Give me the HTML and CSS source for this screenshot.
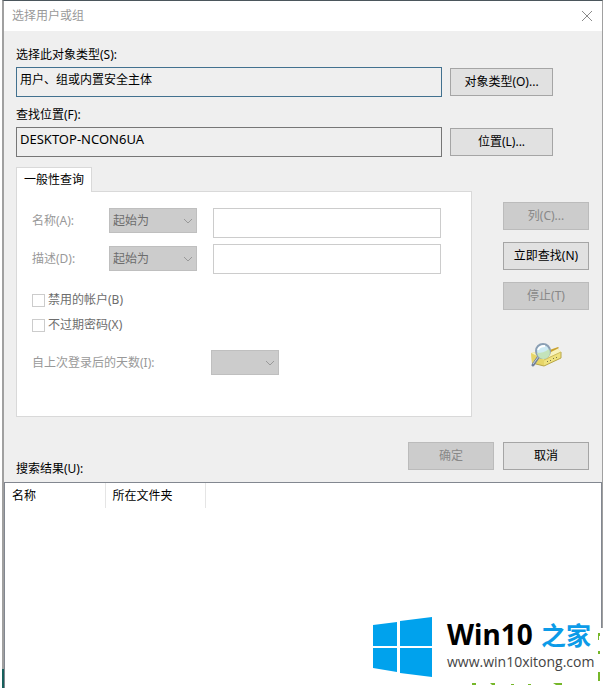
FILE: index.html
```
<!DOCTYPE html>
<html lang="zh-CN">
<head>
    <meta charset="utf-8">
    <title>选择用户或组</title>
    <link rel="stylesheet" href="styles.css">
</head>
<body>
    <form class="dialog">
        <header class="titlebar">
            <h1 class="title">选择用户或组</h1>
            <button class="close" type="button" aria-label="关闭">
                <svg width="12" height="12" viewBox="0 0 12 12"><path d="M1 1l10 10M11 1L1 11" stroke="#8a8a8a" fill="none"/></svg>
            </button>
        </header>

        <div class="content">
            <div class="scope">
                <label class="scopeLabel" for="objectType">选择此对象类型(S):</label>
                <input class="field focused" id="objectType" type="text" value="用户、组或内置安全主体" readonly>
                <button class="btn" type="button">对象类型(O)...</button>
                <label class="scopeLabel" for="location">查找位置(F):</label>
                <input class="field host" id="location" type="text" value="DESKTOP-NCON6UA" readonly>
                <button class="btn" type="button">位置(L)...</button>
            </div>

            <div class="main">
                <section class="query">
                    <button class="tab" type="button">一般性查询</button>
                    <div class="panel">
                        <div class="criteria">
                            <div class="conditions">
                                <label for="nameMode">名称(A):</label>
                                <span class="selectBox">
                                    <select id="nameMode" disabled><option>起始为</option></select>
                                    <svg class="arrow" width="10" height="6" viewBox="0 0 10 6"><path d="M1 1l4 4 4-4"/></svg>
                                </span>
                                <label for="descMode">描述(D):</label>
                                <span class="selectBox">
                                    <select id="descMode" disabled><option>起始为</option></select>
                                    <svg class="arrow" width="10" height="6" viewBox="0 0 10 6"><path d="M1 1l4 4 4-4"/></svg>
                                </span>
                            </div>
                            <div class="values">
                                <input class="value" type="text" aria-label="名称" disabled>
                                <input class="value" type="text" aria-label="描述" disabled>
                            </div>
                        </div>
                        <div class="checks">
                            <label class="check"><input type="checkbox" disabled>禁用的帐户(B)</label>
                            <label class="check"><input type="checkbox" disabled>不过期密码(X)</label>
                        </div>
                        <div class="days">
                            <label for="days">自上次登录后的天数(I):</label>
                            <span class="selectBox small">
                                <select id="days" disabled><option></option></select>
                                <svg class="arrow" width="10" height="6" viewBox="0 0 10 6"><path d="M1 1l4 4 4-4"/></svg>
                            </span>
                        </div>
                    </div>
                </section>

                <div class="actions">
                    <button class="btn" type="button" disabled>列(C)...</button>
                    <button class="btn" type="button">立即查找(N)</button>
                    <button class="btn" type="button" disabled>停止(T)</button>
                    <svg class="searchIcon" width="32" height="26" viewBox="0 0 32 26">
                        <path d="M1 10l9-2 7-1 10-2 4 4v6L14 23 2 20z" fill="#eee08a"/>
                        <path d="M1 10l13 6L31 9l-4-4-10 3z" fill="#f8f3bd"/>
                        <path d="M14 17l17-8v6l-17 8z" fill="#efe27e"/>
                        <path d="M1 10l13 7v6L2 20z" fill="#e6d568"/>
                        <path d="M31 9v6l-17 8-12-3" fill="none" stroke="#b8a64a"/>
                        <path d="M14 17l17-8" stroke="#cdbd62"/>
                        <path d="M17 19l1-1M20 18l1-1M23 16l1-1M26 15l1-1" stroke="#77764a"/>
                        <path d="M20 7l8-3 1 1-8 4z" fill="#c9a02f"/>
                        <path d="M9 13l-6 9" stroke="#71809a" stroke-width="3" stroke-linecap="round"/>
                        <path d="M9 13l-6 8" stroke="#c7d3de"/>
                        <circle cx="13" cy="8" r="7" fill="#cdeaf3" stroke="#8b9fb4" stroke-width="2"/>
                        <path d="M7 10c4 0 8-1 12-4a6 6 0 0 1-11 7z" fill="#c3e3bb"/>
                        <path d="M8 7c1-3 4-4 7-4" stroke="#fff" fill="none" stroke-width="2"/>
                    </svg>
                </div>
            </div>

            <div class="footer">
                <label class="resultLabel" for="results">搜索结果(U):</label>
                <button class="btn" type="button" disabled>确定</button>
                <button class="btn" type="button">取消</button>
            </div>
        </div>

        <div class="list">
            <table class="results" id="results">
                <thead>
                    <tr><th>名称</th><th>所在文件夹</th></tr>
                </thead>
            </table>
        </div>
    </form>

    <div class="watermark">
        <svg class="leaves" width="240" height="60" viewBox="0 0 240 60" fill="#76b72a">
            <path d="M235 0h5v60h-5z" fill="#fff"/>
            <path d="M235 5h2v3h-2zM235 8h1v4h-1zM235 23h2v3h-2zM235 44h2v9h-2zM109 55h4v2h-4zM127 55h5v2h-3zM190 55h9v2h-6zM148 56h3v1h-3zM165 56h3v1h-3z"/>
        </svg>
        <svg class="logo" width="59" height="60" viewBox="0 0 59 60" fill="#00a2ed">
            <path d="M0 8l24-3v24H0zM27 4l32-4v29H27zM0 31h24v24L0 51zM27 31h32v29l-32-4z"/>
        </svg>
        <div class="brand">
            <div class="brandName">Win10<span class="brandSuffix">之家</span></div>
            <div class="brandUrl">www.win10xitong.com</div>
        </div>
    </div>
</body>
</html>
```
FILE: styles.css
```
* {
    box-sizing: border-box;
}

body {
    margin: 0;
    min-height: 100vh;
    padding: 0 0 0 2px;
    display: flex;
    position: relative;
    overflow: hidden;
    background: #fff;
    color: #000;
    font: 12px/18px "Noto Sans", "Noto Sans CJK SC", sans-serif;
}

body::before {
    content: "";
    position: absolute;
    left: 2px;
    bottom: 0;
    width: 2px;
    height: 19px;
    background: #17605c;
}

button, input, select {
    font: inherit;
    color: inherit;
    margin: 0;
    border-radius: 0;
}

.dialog {
    flex: 1;
    display: flex;
    flex-direction: column;
    background: #efefef;
    border: 1px solid #a0a0a0;
    border-top-color: #4b565c;
    border-bottom: none;
    border-left: 2px solid #a0a0a0;
}

.titlebar {
    height: 30px;
    padding: 0 9px 0 8px;
    display: flex;
    align-items: center;
    justify-content: space-between;
    background: #fff;
}

.title {
    margin: 0;
    font-size: 12px;
    font-weight: normal;
    color: #999;
}

.close {
    padding: 0;
    border: none;
    background: none;
    display: flex;
}

.content {
    padding: 15px 13px 12px 12px;
}

.scope {
    display: grid;
    grid-template-columns: 1fr 103px;
    column-gap: 8px;
    row-gap: 3px;
    align-items: center;
    padding-right: 36px;
}

.scopeLabel {
    grid-column: 1 / 3;
}

.field + .btn + .scopeLabel {
    margin-top: 6px;
}

.field {
    width: 100%;
    height: 30px;
    padding: 0 3px 6px;
    border: 1px solid #767676;
    background: #efefef;
}

.focused {
    border-color: #42718f;
}

.host {
    font-size: 13px;
}

.btn {
    height: 28px;
    padding: 0 4px;
    border: 1px solid #a5a5a5;
    background: #e1e1e1;
}

.btn:disabled {
    color: #888;
    background: #ccc;
    border-color: #bbb;
}

.main {
    display: grid;
    grid-template-columns: 1fr 86px;
    gap: 31px;
    margin-top: 10px;
}

.tab {
    display: block;
    position: relative;
    height: 25px;
    padding: 0 7px;
    border: 1px solid #d9d9d9;
    border-bottom: none;
    background: #fff;
}

.panel {
    height: 226px;
    margin-top: -1px;
    padding: 16px 30px 0 15px;
    border: 1px solid #d9d9d9;
    background: #fff;
    color: #999;
}

.criteria {
    display: flex;
    gap: 16px;
}

.conditions {
    display: grid;
    grid-template-columns: 77px 88px;
    row-gap: 13px;
    align-content: start;
    align-items: center;
}

.selectBox {
    position: relative;
    display: block;
    height: 25px;
}

.selectBox select {
    appearance: none;
    width: 100%;
    height: 100%;
    padding: 0 3px;
    border: 1px solid #bfbfbf;
    background: #ccc;
    color: #6d6d6d;
    opacity: 1;
}

.arrow {
    position: absolute;
    right: 4px;
    top: 10px;
    fill: none;
    stroke: #999;
}

.values {
    flex: 1;
    display: grid;
    gap: 6px;
}

.value {
    width: 100%;
    height: 30px;
    border: 1px solid #ccc;
    background: #fff;
}

.checks {
    display: grid;
    gap: 7px;
    margin-top: 17px;
}

.check {
    display: flex;
    align-items: center;
    gap: 3px;
    color: #6d6d6d;
}

.check input {
    appearance: none;
    width: 13px;
    height: 13px;
    border: 1px solid #ccc;
    background: #fff;
}

.days {
    display: flex;
    align-items: center;
    justify-content: space-between;
    width: 247px;
    margin-top: 16px;
}

.small {
    width: 68px;
}

.actions {
    display: flex;
    flex-direction: column;
    gap: 12px;
    padding-top: 35px;
}

.searchIcon {
    margin-top: 21px;
    align-self: center;
}

.footer {
    display: flex;
    gap: 9px;
    margin-top: 25px;
}

.footer .btn {
    width: 86px;
}

.resultLabel {
    flex: 1;
    align-self: flex-end;
    margin-bottom: -8px;
}

.list {
    flex: 1;
    background: #fff;
    border: 1px solid #828790;
    border-bottom: none;
}

.results {
    border-collapse: collapse;
}

.results th {
    width: 100px;
    height: 25px;
    padding: 0 0 0 7px;
    border-right: 1px solid #e5e5e5;
    font-weight: normal;
    text-align: left;
}

.watermark {
    position: absolute;
    right: 5px;
    bottom: 0;
    display: flex;
    gap: 15px;
    padding: 0 7px 11px 10px;
    background: #fff;
}

.logo {
    position: relative;
}

.brand {
    width: 144px;
}

.brandName {
    display: flex;
    align-items: center;
    justify-content: space-between;
    height: 35px;
    font: bold 28px/35px "Noto Sans", sans-serif;
}

.brandSuffix {
    font: bold 25px/35px "Noto Sans CJK SC", sans-serif;
    color: #0c9be8;
}

.brandUrl {
    font: 14px/20px "Open Sans", sans-serif;
    color: #444;
}

.leaves {
    position: absolute;
    right: -5px;
    bottom: 0;
}
```
